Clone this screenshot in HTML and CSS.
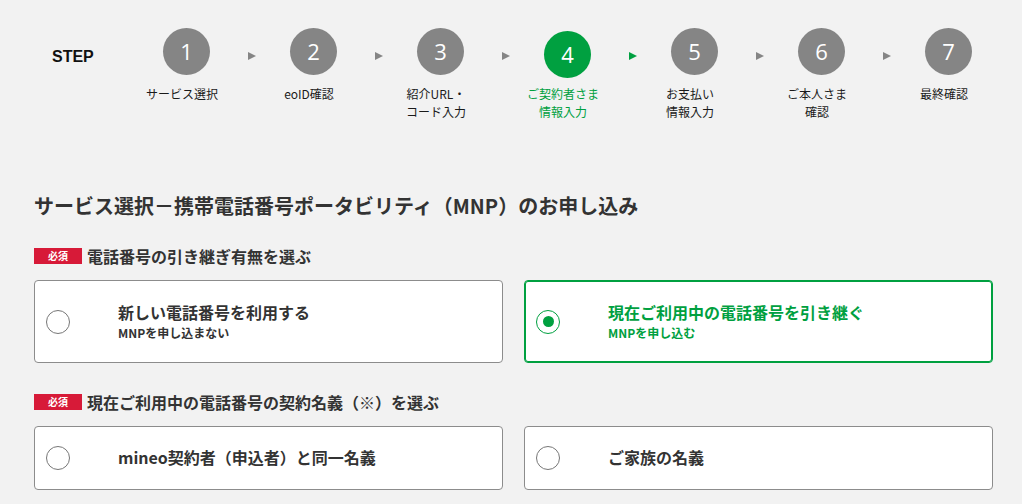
FILE: index.html
```html
<!DOCTYPE html>
<html lang="ja">
<head>
<meta charset="utf-8">
<title>MNP</title>
<link rel="stylesheet" href="styles.css">
</head>
<body>
<div class="steps">
  <div class="step-title">STEP</div>
  <div class="step"><div class="num">1</div><div class="label">サービス選択</div></div>
  <div class="arrow"><span class="tri"></span></div>
  <div class="step"><div class="num">2</div><div class="label">eoID確認</div></div>
  <div class="arrow"><span class="tri"></span></div>
  <div class="step"><div class="num">3</div><div class="label">紹介URL・<br>コード入力</div></div>
  <div class="arrow"><span class="tri"></span></div>
  <div class="step active"><div class="num">4</div><div class="label">ご契約者さま<br>情報入力</div></div>
  <div class="arrow active"><span class="tri"></span></div>
  <div class="step"><div class="num">5</div><div class="label">お支払い<br>情報入力</div></div>
  <div class="arrow"><span class="tri"></span></div>
  <div class="step"><div class="num">6</div><div class="label">ご本人さま<br>確認</div></div>
  <div class="arrow"><span class="tri"></span></div>
  <div class="step"><div class="num">7</div><div class="label">最終確認</div></div>
</div>

<main class="content">
  <h1 class="page-title">サービス選択－携帯電話番号ポータビリティ（MNP）のお申し込み</h1>

  <div class="field-label"><span class="badge">必須</span><span>電話番号の引き継ぎ有無を選ぶ</span></div>
  <div class="choices">
    <label class="card tall">
      <span class="radio"></span>
      <span class="texts">
        <span class="title">新しい電話番号を利用する</span>
        <span class="sub">MNPを申し込まない</span>
      </span>
    </label>
    <label class="card tall selected">
      <span class="radio"></span>
      <span class="texts">
        <span class="title">現在ご利用中の電話番号を引き継ぐ</span>
        <span class="sub">MNPを申し込む</span>
      </span>
    </label>
  </div>

  <div class="field-label second"><span class="badge">必須</span><span>現在ご利用中の電話番号の契約名義（※）を選ぶ</span></div>
  <div class="choices">
    <label class="card short">
      <span class="radio"></span>
      <span class="texts"><span class="title">mineo契約者（申込者）と同一名義</span></span>
    </label>
    <label class="card short">
      <span class="radio"></span>
      <span class="texts"><span class="title">ご家族の名義</span></span>
    </label>
  </div>
</main>
</body>
</html>
```

FILE: styles.css
```css
html, body {
  margin: 0;
  padding: 0;
}
body {
  background: #f2f2f2;
  color: #333;
  font-family: "Noto Sans CJK JP", "Noto Sans", sans-serif;
  width: 1022px;
  height: 504px;
  overflow: hidden;
}

/* steps */
.steps {
  display: flex;
  align-items: flex-start;
  padding: 28px 0 0 52px;
}
.step-title {
  width: 94px;
  font-family: "Liberation Sans", Arial, sans-serif;
  font-weight: bold;
  font-size: 16px;
  line-height: 20px;
  margin-top: 19px;
  color: #111;
}
.step {
  width: 81px;
  display: flex;
  flex-direction: column;
  align-items: center;
}
.num {
  width: 47px;
  height: 47px;
  border-radius: 50%;
  background: #858585;
  color: #fff;
  font-family: "Open Sans", "Noto Sans", sans-serif;
  font-weight: 500;
  font-size: 22px;
  line-height: 46px;
  text-align: center;
}
.label {
  align-self: stretch;
  margin: 10px 0 0 -9px;
  font-size: 12px;
  line-height: 18px;
  text-align: center;
  white-space: nowrap;
  color: #1a1a1a;
}
.step.active .num {
  background: #00a040;
  margin-top: 3px;
}
.step.active .label {
  margin-top: 7px;
  color: #00a040;
}
.arrow {
  width: 46px;
  padding: 24px 0 0 21px;
  box-sizing: border-box;
}
.tri {
  display: block;
  width: 0;
  height: 0;
  border-top: 4.5px solid transparent;
  border-bottom: 4.5px solid transparent;
  border-left: 8px solid #858585;
}
.arrow.active .tri {
  border-left-color: #00a040;
}

/* content */
.content {
  padding: 0 29px 0 34px;
}
.page-title {
  margin: 70px 0 0;
  font-size: 20px;
  line-height: 30px;
  font-weight: bold;
  color: #333;
}
.field-label {
  display: flex;
  align-items: center;
  margin-top: 23px;
  font-size: 16px;
  line-height: 24px;
  font-weight: bold;
  color: #333;
}
.field-label.second {
  margin-top: 27px;
}
.badge {
  width: 48px;
  height: 16px;
  margin-right: 5px;
  background: #d71a38;
  color: #fff;
  font-size: 10px;
  line-height: 16px;
  font-weight: bold;
  text-align: center;
}
.choices {
  display: grid;
  grid-template-columns: 1fr 1fr;
  gap: 21px;
  margin-top: 12px;
}
.card {
  display: flex;
  align-items: center;
  box-sizing: border-box;
  background: #fff;
  border: 1px solid #8c8c8c;
  border-radius: 4px;
  padding-left: 11px;
}
.card.tall {
  height: 83px;
}
.card.short {
  height: 64px;
}
.card.short .title {
  margin-top: -3px;
}
.radio {
  flex: none;
  width: 24px;
  height: 24px;
  box-sizing: border-box;
  border: 1.5px solid #777;
  border-radius: 50%;
  margin-right: 48px;
  display: flex;
  align-items: center;
  justify-content: center;
}
.texts {
  display: flex;
  flex-direction: column;
}
.title {
  font-size: 16px;
  line-height: 22px;
  font-weight: bold;
  color: #333;
}
.sub {
  font-size: 12px;
  line-height: 20px;
  font-weight: bold;
  color: #333;
}
.card.selected {
  border-color: #00a040;
  box-shadow: inset 0 0 0 1px #00a040;
}
.card.selected .radio {
  border-color: #00a040;
}
.card.selected .radio::after {
  content: "";
  width: 11px;
  height: 11px;
  border-radius: 50%;
  background: #00a040;
}
.card.selected .title,
.card.selected .sub {
  color: #00a040;
}
```
